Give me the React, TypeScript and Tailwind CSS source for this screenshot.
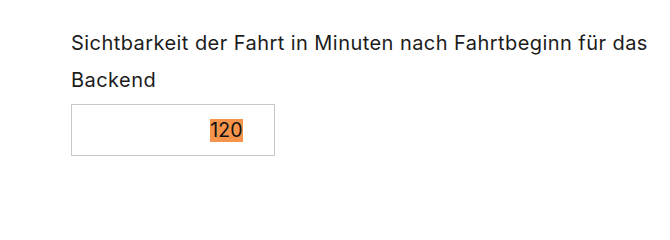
export default function App() {
  return (
    <div className="bg-white w-[670px] h-[202px] pt-[25px] pl-[71px] font-['Inter',sans-serif] text-[#1c1c1c]">
      <label className="block text-[20px] leading-[37px] tracking-[0.44px] w-[592px]">
        Sichtbarkeit der Fahrt in Minuten nach Fahrtbeginn für das Backend
      </label>
      <div className="mt-[5px] w-[204px] h-[52px] border border-[#c9c9c9] flex items-center justify-end pr-[31px]">
        <span className="bg-[#f7944b] text-[19.5px] leading-[23px] text-[#111] px-[0.5px]">120</span>
      </div>
    </div>
  );
}
